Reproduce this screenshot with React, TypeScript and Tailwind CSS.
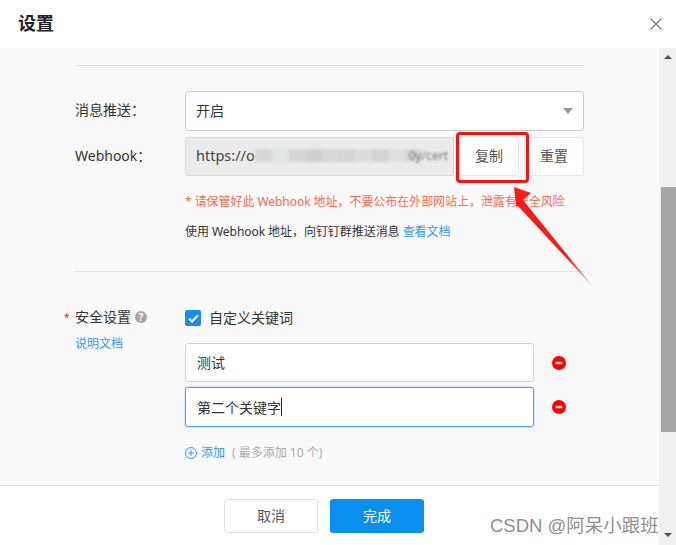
const font = "font-['Noto_Sans','Noto_Sans_CJK_SC',sans-serif]"

const mosaic = [
  { w: 'w-[17px]', c: 'bg-[#d3d7dc]' },
  { w: 'w-[17px]', c: 'bg-[#e2e3e4]' },
  { w: 'w-[16px]', c: 'bg-[#d6d6d6]' },
  { w: 'w-[17px]', c: 'bg-[#cfcfcf]' },
  { w: 'w-[17px]', c: 'bg-[#d9d6d5]' },
  { w: 'w-[16px]', c: 'bg-[#d2d5d9]' },
  { w: 'w-[17px]', c: 'bg-[#dcdcdc]' },
  { w: 'w-[17px]', c: 'bg-[#d4d4d4]' },
  { w: 'w-[16px]', c: 'bg-[#dedfe0]' },
  { w: 'w-[17px]', c: 'bg-[#d8d8d8]' },
]

function Row({ label, children }: { label: React.ReactNode; children: React.ReactNode }) {
  return (
    <div className="flex">
      <div className="w-[110px] shrink-0">{label}</div>
      <div className="flex-1">{children}</div>
    </div>
  )
}

function MinusDot() {
  return (
    <svg width="14" height="14" viewBox="0 0 14 14" className="ml-[18px] shrink-0">
      <circle cx="7" cy="7" r="7" fill="#ff0000" />
      <rect x="3.5" y="5.8" width="7" height="2.4" rx="1" fill="#ffd0d0" />
    </svg>
  )
}

export default function App() {
  return (
    <div className={`${font} relative w-[676px] h-[545px] overflow-hidden flex flex-col bg-white text-[14px] text-[#333]`}>
      <header className="h-12 shrink-0 flex items-center justify-between pl-[18px] pr-[14px]">
        <h1 className="text-lg font-bold text-[#222] pb-[2px]">设置</h1>
        <svg width="12" height="12" viewBox="0 0 12 12" stroke="#777" strokeWidth="1.1" fill="none">
          <path d="M0.5 0.5L11.5 11.5M11.5 0.5L0.5 11.5" />
        </svg>
      </header>

      <div className="flex-1 flex min-h-0">
        <div className="w-[659px] flex flex-col">
          <main className="flex-1 bg-[#f9f9f9] pl-[75px] pr-[75px] pt-[17px]">
            <div className="border-t border-[#e4e4e4]" />
            <div className="mt-[25px]">
              <Row label={<div className="leading-[38px]">消息推送：</div>}>
                <div className="h-10 rounded-[3px] border border-[#ccc] bg-white pl-[10px] pr-[10px] flex items-center justify-between">
                  <span className="pb-[2px]">开启</span>
                  <span className="w-0 h-0 border-x-[5px] border-t-[6px] border-x-transparent border-t-[#999]" />
                </div>
              </Row>
            </div>
            <div className="mt-[6px]">
              <Row label={<div className="leading-[37px]">Webhook：</div>}>
                <div className="flex h-[39px]">
                  <div className="w-[269px] rounded-[3px] border border-[#d9d9d9] bg-[#ebebeb] pl-[10px] pb-[2px] flex items-center overflow-hidden text-[14.5px] text-[#444] whitespace-nowrap">
                    <span>https://o</span>
                    <span className="flex shrink-0 h-[13px] blur-[1.5px]">
                      {mosaic.map((m, i) => (
                        <span key={i} className={`${m.w} ${m.c}`} />
                      ))}
                    </span>
                    <span className="ml-[-13px] text-[12px] blur-[1px] text-[#777] shrink-0">0y/cert</span>
                  </div>
                  <button className="ml-[5px] w-[60px] pb-[2px] rounded-[3px] border border-[#e8e8e8] bg-white text-[#555]">复制</button>
                  <button className="ml-[5px] flex-1 pb-[2px] rounded-r-[3px] border border-[#e8e8e8] bg-white text-[#555]">重置</button>
                </div>
              </Row>
            </div>
            <div className="ml-[110px] mt-[17px] text-xs leading-[18px] tracking-[-0.05px] text-[#ff6a4d] whitespace-nowrap">
              * 请保管好此 Webhook 地址，不要公布在外部网站上，泄露有安全风险
            </div>
            <div className="ml-[110px] mt-[12px] text-xs leading-[18px] tracking-[-0.05px] text-[#333] whitespace-nowrap">
              使用 Webhook 地址，向钉钉群推送消息 <span className="text-[#3296fa]">查看文档</span>
            </div>
            <div className="mt-[30px] border-t border-[#e4e4e4]" />
            <div className="mt-[36px]">
              <Row
                label={
                  <div className="relative">
                    <span className="absolute left-[-11px] top-0 font-['Liberation_Sans'] text-[#f5222d] leading-5">*</span>
                    <div className="flex items-center h-5 pb-[3px]">
                      安全设置
                      <span className="ml-[4px] mt-[1px] w-3 h-3 rounded-full bg-[#a6a6a6] text-white text-[10px] font-bold leading-3 text-center">?</span>
                    </div>
                    <div className="mt-[6px] text-xs leading-5 text-[#3296fa]">说明文档</div>
                  </div>
                }
              >
                <div className="flex items-center h-5">
                  <span className="w-4 h-4 rounded-[2px] bg-[#1a8cf0] flex items-center justify-center">
                    <svg width="11" height="9" viewBox="0 0 11 9" fill="none" stroke="#fff" strokeWidth="2">
                      <path d="M1 4.5L4 7.5L10 1.2" />
                    </svg>
                  </span>
                  <span className="ml-2 pb-[2px]">自定义关键词</span>
                </div>
                <div className="mt-[15px] flex items-center">
                  <div className="w-[349px] h-[39px] rounded-[3px] border border-[#d4d4d4] bg-white pl-[11px] flex items-center">测试</div>
                  <MinusDot />
                </div>
                <div className="mt-[5px] flex items-center">
                  <div className="w-[349px] h-10 rounded-[3px] border border-[#4ba6f5] shadow-[0_0_0_1px_#d5e9fb] bg-white pl-[11px] flex items-center">
                    第二个关键字<span className="w-px h-[18px] bg-[#222]" />
                  </div>
                  <MinusDot />
                </div>
                <div className="mt-[16px] flex items-center text-xs leading-5">
                  <svg width="12" height="12" viewBox="0 0 12 12" fill="none" stroke="#3296fa" strokeWidth="1">
                    <circle cx="6" cy="6" r="5.5" />
                    <path d="M6 3V9M3 6H9" />
                  </svg>
                  <span className="ml-[4px] text-[#3296fa]">添加</span>
                  <span className="ml-[7px] text-[#aaa]">( 最多添加 10 个)</span>
                </div>
              </Row>
            </div>
          </main>
          <footer className="h-[60px] shrink-0 border-t border-[#e4e4e4] flex items-center justify-center gap-3 pr-[11px]">
            <button className="w-[94px] h-[34px] rounded-[3px] border border-[#e4e4e4] bg-white text-[#555]">取消</button>
            <button className="w-[94px] h-[34px] rounded-[3px] bg-[#0a8ff0] text-white">完成</button>
          </footer>
        </div>

        <aside className="w-[17px] bg-[#f0f0f0] flex flex-col items-end relative">
          <span className="absolute left-[5px] top-[7px] w-0 h-0 border-x-[4px] border-b-[4px] border-x-transparent border-b-[#505050]" />
          <div className="mt-[139px] w-[15px] h-[245px] bg-[#a6a6a6]" />
          <span className="absolute left-[5px] bottom-[8px] w-0 h-0 border-x-[4px] border-t-[4px] border-x-transparent border-t-[#505050]" />
        </aside>
      </div>

      {/* annotation drawn over the screenshot */}
      <div className="absolute left-[456px] top-[132px] w-[73px] h-[51px] rounded-[4px] border-[3px] border-[#f01414]" />
      <svg className="absolute left-[505px] top-[180px]" width="95" height="115" viewBox="0 0 95 115">
        <defs>
          <linearGradient id="tail" x1="0" y1="0" x2="0" y2="1">
            <stop offset="0.7" stopColor="#f51c1c" />
            <stop offset="1" stopColor="#f51c1c" stopOpacity="0.25" />
          </linearGradient>
        </defs>
        <path d="M9 7L26 13L18 20L89 108L13 26L11 27Z" fill="url(#tail)" />
      </svg>

      <div className="absolute left-[490px] top-[514px] font-['Liberation_Sans','Noto_Sans_CJK_SC',sans-serif] text-[18.5px] leading-6 text-[#8f8f8f] whitespace-nowrap">CSDN @阿呆小跟班</div>
    </div>
  )
}
